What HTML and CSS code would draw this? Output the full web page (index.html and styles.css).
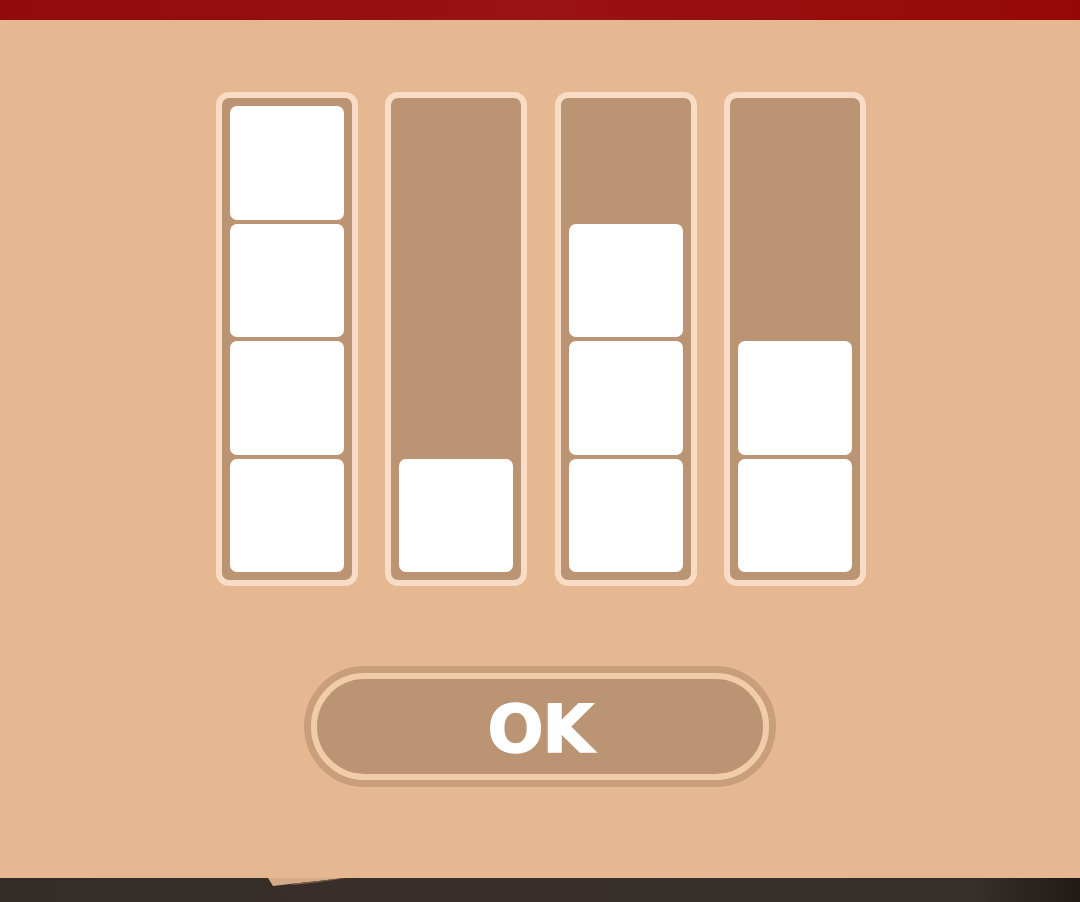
FILE: index.html
```html
<html>
  <head>
    <meta name="viewport" content="width=device-width,initial-scale=1">
    <link rel="stylesheet" href="styles.css">
  </head>

  <body>
    <div class="topbar"></div>

    <div class="panel">
      <div class="levels">
        <div class="level">
          <div class="cell"></div>
          <div class="cell"></div>
          <div class="cell"></div>
          <div class="cell"></div>
        </div>
        <div class="level">
          <div class="cell"></div>
        </div>
        <div class="level">
          <div class="cell"></div>
          <div class="cell"></div>
          <div class="cell"></div>
        </div>
        <div class="level">
          <div class="cell"></div>
          <div class="cell"></div>
        </div>
      </div>

      <div class="ok_ring">
        <button class="ok_button">OK</button>
      </div>
    </div>

    <div class="bottombar">
      <!-- corner of the sheet lying under the panel -->
      <svg class="sheet_corner" width="78" height="9" viewBox="0 0 78 9">
        <polygon points="0,0 76,0 50,3 22,6 5,8" fill="#d6ab88"/>
        <polygon points="22,6 50,3 76,0 78,0 52,4 26,7" fill="#7d5f4a"/>
      </svg>
    </div>
  </body>
</html>
```

FILE: styles.css
```css
body {
    margin: 0;
    background: #332c28;
    font-family: 'DejaVu Sans', sans-serif;
}
.topbar {
    height: 20px;
    background: linear-gradient(90deg, #920a0a, #9b1212 50%, #960808);
}
.panel {
    height: 858px;
    box-sizing: border-box;
    padding-top: 72px;
    background: #e6b892;
    display: flex;
    flex-direction: column;
    align-items: center;
}
/* four wells, cells stack up from the bottom */
.levels {
    display: grid;
    grid-template-columns: repeat(4, 142px);
    column-gap: 27.5px;
    height: 494px;
    margin-left: 2px;
}
.level {
    box-sizing: border-box;
    height: 100%;
    border: 6px solid #f8dcc5;
    border-radius: 13px;
    background: #bb9573;
    padding: 8px;
    display: flex;
    flex-direction: column;
    justify-content: flex-end;
    gap: 4px;
}
.cell {
    flex: 0 0 calc((100% - 12px) / 4);
    background: #ffffff;
    border-radius: 7px;
}
.ok_ring {
    margin-top: 80px;
    width: 472px;
    height: 121px;
    box-sizing: border-box;
    border: 7px solid #c99e7b;
    border-radius: 61px;
}
.ok_button {
    display: block;
    width: 100%;
    height: 100%;
    box-sizing: border-box;
    border: 6px solid #f0cca9;
    border-radius: 54px;
    background: #bb9573;
    color: #ffffff;
    font-family: 'DejaVu Sans', sans-serif;
    font-weight: 700;
    font-size: 66px;
    letter-spacing: -1px;
    -webkit-text-stroke: 1.5px #ffffff;
    padding: 6px 0 0 0;
    line-height: 1;
}
.bottombar {
    height: 24px;
    padding-left: 268px;
    background: linear-gradient(90deg, #332c28, #3a302b 45%, #35302c 90%, #221a17);
}
.sheet_corner {
    display: block;
}
```
